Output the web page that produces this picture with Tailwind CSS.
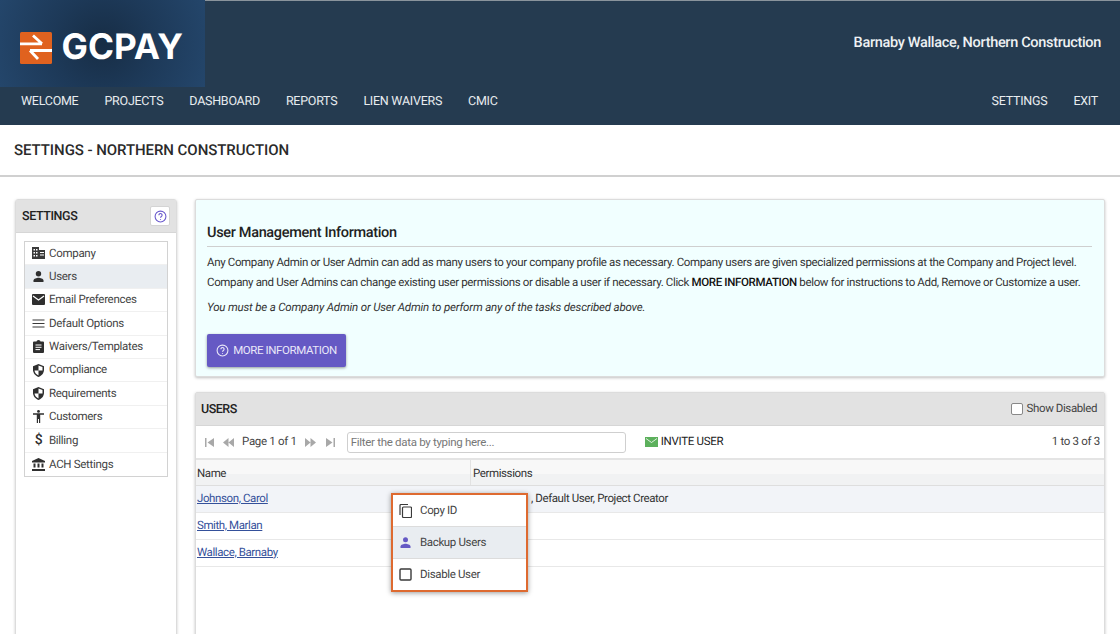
<!DOCTYPE html>
<html lang="en">
  <head>
    <meta charset="UTF-8" />
    <meta name="viewport" content="width=device-width, initial-scale=1.0" />
    <title>GCPay settings</title>
    <script src="https://cdn.jsdelivr.net/npm/@tailwindcss/browser@4"></script>
  </head>
  <body class="h-[634px] overflow-hidden bg-white font-['Roboto',sans-serif] text-[#333] [text-rendering:geometricPrecision]">
    <!-- header -->
    <header class="h-[125px] bg-[#253b50] text-[#e8ecef]">
      <div class="flex h-[87px] border-t border-[#8a949c]">
        <div class="-mt-px flex h-[87px] w-[205px] items-center bg-[radial-gradient(circle_at_50%_50%,#172d45_0%,#1d3958_45%,#24466b_100%)] pl-[20px] pt-[8px]">
          <svg width="32" height="32" viewBox="0 0 32 32" class="shrink-0">
            <rect width="32" height="32" rx="1.500" fill="#e0621f" />
            <path d="M0 11.800h22M13 3.500l9 8.300M32 18.500H10M10 18.500l8 8.500" stroke="#fff" stroke-width="2.800" fill="none" />
          </svg>
          <span class="ml-[9.500px] font-['Inter',sans-serif] text-[35.200px] leading-none font-bold text-white">GCPAY</span>
        </div>
        <div class="flex-1 pt-[32px] pr-[19px] text-right text-[14.500px] leading-[20px] font-medium tracking-[-0.32px] text-[#eef1f3]">Barnaby Wallace, Northern Construction</div>
      </div>
      <nav class="flex h-[38px] items-center justify-between pr-[22px] pb-[8px] pl-[21px] text-[12.500px] tracking-[-0.26px]">
        <div class="flex gap-[26px]">
          <a>WELCOME</a>
          <a>PROJECTS</a>
          <a>DASHBOARD</a>
          <a>REPORTS</a>
          <a>LIEN WAIVERS</a>
          <a>CMIC</a>
        </div>
        <div class="flex gap-[26px]">
          <a>SETTINGS</a>
          <a>EXIT</a>
        </div>
      </nav>
    </header>

    <div class="flex h-[52px] items-center border-b-2 border-[#d0d0d0] pl-[14px] text-[15px] font-medium tracking-[-0.06px] text-[#2a2a2a]">SETTINGS - NORTHERN CONSTRUCTION</div>

    <div class="flex gap-[18px] pt-[22px] pr-[15px] pl-[15px]">
      <!-- sidebar -->
      <aside class="h-[460px] w-[162px] shrink-0 rounded-[3px] border border-[#dcdcdc] shadow-[0_1px_3px_rgba(0,0,0,0.2)]">
        <div class="flex h-[33px] items-center justify-between border-b border-[#d6d6d6] bg-[#e2e2e2] pr-[6px] pl-[6px] text-[12.500px] font-medium tracking-[-0.4px] text-[#222]">
          <span class="pt-[2px]">SETTINGS</span>
          <span class="flex h-[20px] w-[20px] items-center justify-center rounded-[2px] border border-[#d4d4d4] bg-white">
            <svg width="13" height="13" viewBox="0 0 24 24" fill="none" stroke="#6a5acd" stroke-width="2"><circle cx="12" cy="12" r="10" /><path d="M9 9.500a3 3 0 1 1 4.600 2.500c-1 .7-1.600 1.300-1.600 2.500" /><path d="M12 17v1.500" /></svg>
          </span>
        </div>
        <ul class="mx-[8px] mt-[8px] border border-[#d2d2d2] text-[11.500px] leading-[23.400px] tracking-[-0.3px] text-[#444]">
          <li class="flex h-[23.400px] items-center border-b border-[#f0f0f0] pl-[7px]">
            <svg class="mr-[4px] w-[13px]" height="12" viewBox="0 0 13 12" fill="#3a3a3a"><path d="M0 0h7v12H0zM7 3h6v9H7z" /><path d="M1.500 2h1.500v1.500h-1.500zM4 2h1.500v1.500H4zM1.500 5h1.500v1.500h-1.500zM4 5h1.500v1.500H4zM1.500 8h1.500v1.500h-1.500zM4 8h1.500v1.500H4zM8 5h4v1H8zM8 7.500h4v1H8z" fill="#fff" /></svg>
            Company
          </li>
          <li class="flex h-[23.400px] items-center border-b border-[#f0f0f0] bg-[#e9edf1] pl-[7px]">
            <svg class="mr-[4px] w-[13px]" height="11" viewBox="0 0 13 11" fill="#2f2f2f"><circle cx="6.500" cy="2.700" r="2.700" /><path d="M1.500 11V9.500c0-1.800 3.300-2.800 5-2.800s5 1 5 2.800V11z" /></svg>
            Users
          </li>
          <li class="flex h-[23.400px] items-center border-b border-[#f0f0f0] pl-[7px]">
            <svg class="mr-[4px] w-[13px]" height="11" viewBox="0 0 13 11" fill="#2f2f2f"><rect width="13" height="11" rx="1" /><path d="M1 2l5.500 4L12 2" stroke="#fff" fill="none" stroke-width="1.200" /></svg>
            Email Preferences
          </li>
          <li class="flex h-[23.400px] items-center border-b border-[#f0f0f0] pl-[7px]">
            <svg class="mr-[4px] w-[13px]" height="9" viewBox="0 0 13 9" stroke="#3a3a3a" stroke-width="1.200"><path d="M0.500 1h12M0.500 4.500h12M0.500 8h12" /></svg>
            Default Options
          </li>
          <li class="flex h-[23.400px] items-center border-b border-[#f0f0f0] pl-[7px]">
            <svg class="mr-[4px] w-[13px]" height="13" viewBox="0 0 13 13" fill="#2f2f2f"><path d="M2 1.500h2.500a2 1.500 0 0 1 4 0H11a1 1 0 0 1 1 1V12a1 1 0 0 1-1 1H2a1 1 0 0 1-1-1V2.500a1 1 0 0 1 1-1z" /><path d="M3.500 5h6M3.500 7.300h6M3.500 9.600h4.500" stroke="#fff" stroke-width="1" /></svg>
            Waivers/Templates
          </li>
          <li class="flex h-[23.400px] items-center border-b border-[#f0f0f0] pl-[7px]">
            <svg class="mr-[4px] w-[13px]" height="13" viewBox="0 0 13 13" fill="#2f2f2f"><path d="M6.500 0l5.500 2.200v3.600c0 3.300-2.300 6.100-5.500 7.200C3.300 11.900 1 9.100 1 5.800V2.200z" /><path d="M6.500 1.500v5H2.500c.2 2 1.800 4 4 5v-5h4V3z" fill="#fff" /></svg>
            Compliance
          </li>
          <li class="flex h-[23.400px] items-center border-b border-[#f0f0f0] pl-[7px]">
            <svg class="mr-[4px] w-[13px]" height="13" viewBox="0 0 13 13" fill="#2f2f2f"><path d="M6.500 0l5.500 2.200v3.600c0 3.300-2.300 6.100-5.500 7.200C3.300 11.900 1 9.100 1 5.800V2.200z" /><path d="M6.500 1.500v5H2.500c.2 2 1.800 4 4 5v-5h4V3z" fill="#fff" /></svg>
            Requirements
          </li>
          <li class="flex h-[23.400px] items-center border-b border-[#f0f0f0] pl-[7px]">
            <svg class="mr-[4px] w-[13px]" height="13" viewBox="0 0 13 13" fill="#2f2f2f"><circle cx="6.500" cy="1.400" r="1.400" /><path d="M1 3.300h11v1.400H8.200V13H7V9H6v4H4.800V4.700H1z" /></svg>
            Customers
          </li>
          <li class="flex h-[23.400px] items-center border-b border-[#f0f0f0] pl-[7px]">
            <span class="mr-[4px] w-[13px] text-center text-[14px] font-medium text-[#2f2f2f]">$</span>
            Billing
          </li>
          <li class="flex h-[23.400px] items-center pl-[7px]">
            <svg class="mr-[4px] w-[13px]" height="13" viewBox="0 0 13 13" fill="#2f2f2f"><path d="M6.500 0L13 3v1.500H0V3z" /><path d="M1.500 5.500h2v4h-2zM5.500 5.500h2v4h-2zM9.500 5.500h2v4h-2zM0 11h13v2H0z" /></svg>
            ACH Settings
          </li>
        </ul>
      </aside>

      <main class="min-w-0 flex-1">
        <!-- info card -->
        <section class="h-[178px] rounded-[2px] border border-[#dcdcdc] bg-[#f1ffff] pt-[23px] pr-[12px] pl-[11px] shadow-[0_1px_3px_rgba(0,0,0,0.25)]">
          <h2 class="border-b border-[#cfcfcf] pb-[3px] text-[14.500px] leading-[20px] font-medium tracking-[-0.33px] text-[#222]">User Management Information</h2>
          <p class="mt-[6px] text-[11.500px] leading-[19.500px] tracking-[-0.35px] whitespace-nowrap text-[#333]">Any Company Admin or User Admin can add as many users to your company profile as necessary. Company users are given specialized permissions at the Company and Project level.<br />Company and User Admins can change existing user permissions or disable a user if necessary. Click <b class="font-medium text-[#111]">MORE INFORMATION</b> below for instructions to Add, Remove or Customize a user.</p>
          <p class="mt-[6px] text-[11.500px] leading-[19.500px] tracking-[-0.18px] text-[#333] italic">You must be a Company Admin or User Admin to perform any of the tasks described above.</p>
          <button class="mt-[16px] flex h-[33px] w-[139px] items-center justify-center gap-[4px] rounded-[2px] bg-[#6559c4] pt-px text-[11.500px] tracking-[-0.4px] text-[#e9e7f8] shadow-[0_1px_3px_rgba(0,0,0,0.4)]">
            <svg width="13" height="13" viewBox="0 0 24 24" fill="none" stroke="#e9e7f8" stroke-width="2"><circle cx="12" cy="12" r="10" /><path d="M9 9.500a3 3 0 1 1 4.600 2.500c-1 .7-1.600 1.300-1.600 2.500" /><path d="M12 17v1.500" /></svg>
            MORE INFORMATION
          </button>
        </section>

        <!-- users grid -->
        <section class="relative mt-[15px] h-[300px] rounded-[2px] border border-[#dcdcdc] shadow-[0_1px_3px_rgba(0,0,0,0.25)]">
          <div class="flex h-[33px] items-center justify-between border-b border-[#d6d6d6] bg-[#e2e2e2] pr-[7px] pl-[5px] text-[12.500px] font-medium tracking-[-0.5px] text-[#222]">
            <span class="pt-[3px]">USERS</span>
            <label class="flex items-center gap-[4px] text-[11.500px] font-normal tracking-[-0.4px] text-[#444]">
              <span class="h-[12px] w-[12px] rounded-[2px] border border-[#888] bg-white"></span>
              Show Disabled
            </label>
          </div>
          <div class="flex h-[34px] items-center border-b-2 border-[#e4e4e4] pr-[4px] pl-[9px] text-[11.500px] tracking-[-0.3px] text-[#444]">
            <svg width="10" height="9" viewBox="0 0 10 9" fill="#a8a8a8"><path d="M0 0h1.500v9H0zM9 0v9L2.500 4.500z" /></svg>
            <svg class="ml-[8px]" width="11" height="9" viewBox="0 0 11 9" fill="#a8a8a8"><path d="M5.500 0v9L0 4.500zM11 0v9L5.500 4.500z" /></svg>
            <span class="mx-[8px]">Page 1 of 1</span>
            <svg width="11" height="9" viewBox="0 0 11 9" fill="#a8a8a8"><path d="M0 0v9l5.500-4.500zM5.500 0v9L11 4.500z" /></svg>
            <svg class="ml-[9px]" width="10" height="9" viewBox="0 0 10 9" fill="#a8a8a8"><path d="M8.500 0H10v9H8.500zM1 0v9l6.500-4.500z" /></svg>
            <input class="ml-[12px] h-[21px] w-[279px] rounded-[3px] border border-[#cfcfcf] bg-white px-[3px] text-[11.500px] tracking-[-0.3px] placeholder:text-[#777]" placeholder="Filter the data by typing here..." />
            <svg class="ml-[19px]" width="13" height="10" viewBox="0 0 13 10"><rect width="13" height="10" fill="#5cb05c" /><path d="M1 1.500l5.500 4 5.500-4" stroke="#fff" fill="none" stroke-width="0.800" /></svg>
            <span class="ml-[3px] text-[#222]">INVITE USER</span>
            <span class="ml-auto">1 to 3 of 3</span>
          </div>
          <div class="flex h-[26px] border-b border-[#dedede] bg-[linear-gradient(#f8f8f8_55%,#f1f2f3_55%)] text-[11.500px] leading-[26px] tracking-[-0.4px] text-[#333]">
            <div class="w-[275px] border-r border-[#e2e2e2] pl-[1px]">Name</div>
            <div class="pl-[2px]">Permissions</div>
          </div>
          <div class="flex h-[27px] border-b border-[#e8e8e8] bg-[#f2f4f8] text-[11.500px] leading-[25px] tracking-[-0.4px]">
            <a class="w-[275px] pl-[1px] text-[#34509a] underline">Johnson, Carol</a>
            <span class="pl-[60px]">, Default User, Project Creator</span>
          </div>
          <div class="h-[26.500px] border-b border-[#e8e8e8] pl-[1px] text-[11.500px] leading-[25px] tracking-[-0.4px]"><a class="text-[#34509a] underline">Smith, Marlan</a></div>
          <div class="h-[27px] border-b border-[#e8e8e8] pl-[1px] text-[11.500px] leading-[25px] tracking-[-0.4px]"><a class="text-[#34509a] underline">Wallace, Barnaby</a></div>

          <!-- context menu -->
          <div class="absolute top-[100px] left-[195px] w-[137px] border-[2px] border-[#de6a30] bg-white text-[11.500px] tracking-[-0.35px] text-[#444] shadow-[0_1px_5px_rgba(0,0,0,0.4)]">
            <div class="flex h-[32px] items-center border-b border-[#dcdcdc] pl-[6px]">
              <svg class="mr-[8px]" width="13" height="14" viewBox="0 0 13 14" fill="none" stroke="#3a3a3a" stroke-width="1.200"><path d="M1 11V1.500a1 1 0 0 1 1-1h7" /><rect x="3.500" y="3" width="9" height="10.500" rx="1" /></svg>
              Copy ID
            </div>
            <div class="flex h-[32px] items-center border-b border-[#dcdcdc] bg-[#e9edf1] pl-[6px]">
              <svg class="mr-[8px]" width="13" height="11" viewBox="0 0 13 11" fill="#6559c4"><circle cx="6.500" cy="2.700" r="2.500" /><path d="M1.500 11V9.500c0-1.800 3.300-2.800 5-2.800s5 1 5 2.800V11z" /></svg>
              Backup Users
            </div>
            <div class="flex h-[31px] items-center pl-[6px]">
              <svg class="mr-[8px]" width="13" height="13" viewBox="0 0 13 13" fill="none" stroke="#3a3a3a" stroke-width="1.400"><rect x="1" y="1" width="11" height="11" rx="1" /></svg>
              Disable User
            </div>
          </div>
        </section>
      </main>
    </div>
  </body>
</html>
